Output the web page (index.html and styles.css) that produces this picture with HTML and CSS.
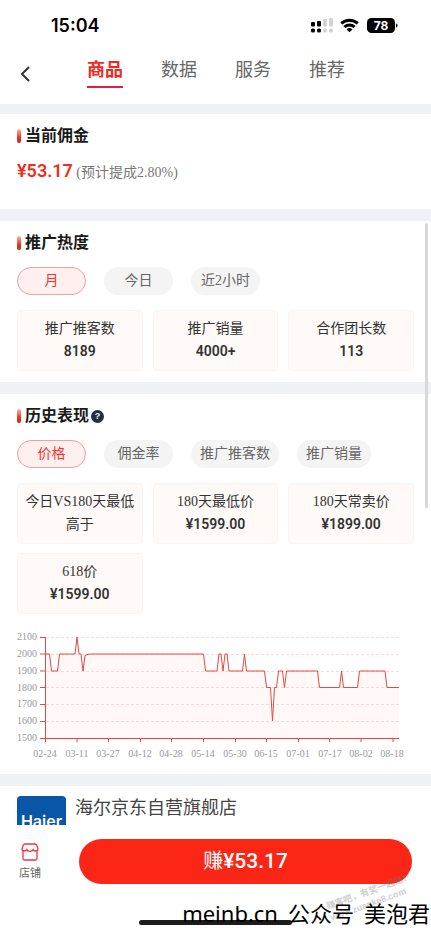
FILE: index.html
```html
<!DOCTYPE html>
<html lang="zh-CN">
<head>
<meta charset="utf-8">
<meta name="viewport" content="width=device-width, initial-scale=1">
<title>商品</title>
<link rel="stylesheet" href="styles.css">
</head>
<body>
<div class="app">
  <div class="status">
    <span class="time">15:04</span>
    <svg class="status-icons" width="88" height="18" viewBox="0 0 88 18" aria-hidden="true">
      <rect x="1" y="5" width="4" height="4.5" rx="1"/>
      <rect x="7" y="4" width="4" height="5.5" rx="1"/>
      <g class="dim">
        <rect x="13" y="2" width="4" height="7.5" rx="1"/>
        <rect x="19" y="1" width="4" height="8.5" rx="1"/>
        <rect x="13" y="11.500" width="4" height="4" rx="1.500"/>
        <rect x="19" y="11.500" width="4" height="4" rx="1.500"/>
      </g>
      <rect x="1" y="11.500" width="4" height="4" rx="1.500"/>
      <rect x="7" y="11.500" width="4" height="4" rx="1.500"/>
      <g class="wifi">
        <path d="M31.300 6.400a12.200 12.200 0 0 1 16.400 0"/>
        <path d="M34.400 10a7.500 7.500 0 0 1 10.200 0"/>
      </g>
      <path d="M39.500 15.300l-2.900-2.900a4.200 4.200 0 0 1 5.800 0z"/>
      <rect x="57" y="1" width="28" height="15" rx="4.500"/>
      <path d="M86 6.500c2 .5 2 3.500 0 4z"/>
      <text x="71" y="12.500" text-anchor="middle">78</text>
    </svg>
  </div>
  <header class="topbar">
    <button class="back" type="button" aria-label="返回">
      <svg width="12" height="18" viewBox="0 0 12 18" aria-hidden="true"><path d="M10 2L3 9l7 7"/></svg>
    </button>
    <nav class="tabs">
      <a class="tab active" href="#">商品</a>
      <a class="tab" href="#">数据</a>
      <a class="tab" href="#">服务</a>
      <a class="tab" href="#">推荐</a>
    </nav>
  </header>
  <main>
    <section class="panel commission">
      <h2>当前佣金</h2>
      <p class="amount"><strong>¥53.17</strong> (预计提成2.80%)</p>
    </section>
    <section class="panel">
      <h2>推广热度</h2>
      <div class="pills">
        <button class="pill selected" type="button">月</button>
        <button class="pill" type="button">今日</button>
        <button class="pill" type="button">近2小时</button>
      </div>
      <div class="cards">
        <div class="card"><span>推广推客数</span><b>8189</b></div>
        <div class="card"><span>推广销量</span><b>4000+</b></div>
        <div class="card"><span>合作团长数</span><b>113</b></div>
      </div>
    </section>
    <section class="panel">
      <h2>历史表现<button class="help" type="button">?</button></h2>
      <div class="pills">
        <button class="pill selected" type="button">价格</button>
        <button class="pill" type="button">佣金率</button>
        <button class="pill" type="button">推广推客数</button>
        <button class="pill" type="button">推广销量</button>
      </div>
      <div class="cards">
        <div class="card"><span>今日VS180天最低高于</span></div>
        <div class="card"><span>180天最低价</span><b>¥1599.00</b></div>
        <div class="card"><span>180天常卖价</span><b>¥1899.00</b></div>
        <div class="card"><span>618价</span><b>¥1599.00</b></div>
      </div>
      <svg class="chart" viewBox="17 614 397 149">
        <path class="area" d="M46 738V654H49.500L51.500 671H57.500L59.500 654H75L77 637L79 654H81L83 671L85 655.500L89 654H203.500L205.500 671H217L219 654H221L223 671L225 654H227L229 671H242.500L244.500 654L246.500 671H264.500L266.500 687.500H270.500L272.500 721L274.500 687.500H276.500L278.500 671H282.500L284.500 687.500L286.500 671H317.500L319.500 687.500H339.500L341.500 671L343.500 687.500H357.500L359.500 671H385L387 687.500H399V738Z"/>
        <path class="grid" d="M46 637.500H399M46 654.500H399M46 671.500H399M46 687.500H399M46 704.500H399M46 721.500H399"/>
        <path class="axis" d="M45.500 637V742M40 637.500H46M40 654H46M40 671H46M40 687.500H46M40 704.500H46M40 721.500H46M40 738.500H399M77 738V742M108.500 738V742M140.500 738V742M171.500 738V742M203.500 738V742M235.500 738V742M266.500 738V742M298.500 738V742M329.500 738V742M361 738V742M393 738V742"/>
        <path class="line" d="M46 654H49.500L51.500 671H57.500L59.500 654H75L77 637L79 654H81L83 671L85 655.500L89 654H203.500L205.500 671H217L219 654H221L223 671L225 654H227L229 671H242.500L244.500 654L246.500 671H264.500L266.500 687.500H270.500L272.500 721L274.500 687.500H276.500L278.500 671H282.500L284.500 687.500L286.500 671H317.500L319.500 687.500H339.500L341.500 671L343.500 687.500H357.500L359.500 671H385L387 687.500H399"/>
        <g class="ylabels">
          <text x="37" y="640">2100</text>
          <text x="37" y="657">2000</text>
          <text x="37" y="674">1900</text>
          <text x="37" y="691">1800</text>
          <text x="37" y="707">1700</text>
          <text x="37" y="724">1600</text>
          <text x="37" y="741">1500</text>
        </g>
        <g class="xlabels">
          <text x="45" y="757">02-24</text>
          <text x="77" y="757">03-11</text>
          <text x="108" y="757">03-27</text>
          <text x="140" y="757">04-12</text>
          <text x="171" y="757">04-28</text>
          <text x="203" y="757">05-14</text>
          <text x="235" y="757">05-30</text>
          <text x="266" y="757">06-15</text>
          <text x="298" y="757">07-01</text>
          <text x="330" y="757">07-17</text>
          <text x="361" y="757">08-02</text>
          <text x="392" y="757">08-18</text>
        </g>
      </svg>
    </section>
    <section class="shop">
      <svg class="logo" width="49" height="29" viewBox="0 0 49 29" role="img" aria-label="Haier">
        <path d="M0 29V4a4 4 0 0 1 4-4H45a4 4 0 0 1 4 4V29z"/>
        <text x="24.500" y="31" text-anchor="middle">Haier</text>
      </svg>
      <h3>海尔京东自营旗舰店</h3>
    </section>
  </main>
  <footer class="actions">
    <a class="store" href="#">
      <svg width="18" height="18" viewBox="0 0 18 18" aria-hidden="true">
        <path d="M4 1H14a2 2 0 0 1 1.800 1.200L17 5.800c.2 2.400-3.600 3-4.800.8-1.200 2.400-5.200 2.400-6.400 0C4.600 8.800.8 8.200 1 5.800L2.200 2.200A2 2 0 0 1 4 1zM2 8V15.500a1.500 1.500 0 0 0 1.500 1.500H14.500a1.500 1.500 0 0 0 1.500-1.500V8"/>
      </svg>
      店铺
    </a>
    <button class="earn" type="button">赚<strong>¥53.17</strong></button>
  </footer>
  <div class="scroll-thumb"></div>
  <div class="stamp">赚客吧，有奖一起赚！<br>www.zuanke8.com</div>
  <div class="home-bar"></div>
  <div class="credit"><span>meinb.cn</span><span>公众号</span><span>美泡君</span></div>
</div>
</body>
</html>
```
FILE: styles.css
```css
* {
  box-sizing: border-box;
}

body {
  margin: 0;
  background: #fff;
  color: #333;
  font: 14px/23px "Liberation Serif", "Noto Sans CJK SC", serif;
}

button {
  border: 0;
  padding: 0;
  background: none;
  color: inherit;
  font: inherit;
}

a {
  color: inherit;
  text-decoration: none;
}

h2, h3, p {
  margin: 0;
}

.app {
  position: relative;
  min-height: 100vh;
  overflow: hidden;
}

.status {
  display: flex;
  justify-content: space-between;
  align-items: center;
  padding: 12px 33px 12px 51px;
  color: #000;
}

.time {
  font: 600 18px/28px Inter, sans-serif;
}

.status-icons .dim {
  fill: #d2d2d2;
}

.status-icons .wifi {
  fill: none;
  stroke: #000;
  stroke-width: 3;
}

.status-icons text {
  fill: #fff;
  font: 700 12px Inter, sans-serif;
}

.topbar {
  display: flex;
  align-items: center;
  gap: 56px;
  padding: 5px 19px 16px;
}

.back {
  display: flex;
  padding-top: 2px;
}

.back path {
  fill: none;
  stroke: #333;
  stroke-width: 2;
}

.tabs {
  display: flex;
  gap: 38px;
}

.tab {
  border-bottom: 2px solid transparent;
  padding-bottom: 2px;
  color: #666;
  font-size: 18px;
  line-height: 27px;
}

.tab.active {
  border-color: #e0203a;
  color: #f5271b;
  font-weight: 700;
}

.panel, .shop {
  border-top: 12px solid #f0f1f5;
}

.panel {
  padding: 10px 17px 11px;
}

.commission {
  border-top-width: 10px;
  padding-bottom: 24px;
}

h2 {
  display: flex;
  align-items: center;
  color: #1a1a1a;
  font-size: 16px;
  line-height: 24px;
}

h2::before {
  content: "";
  width: 4px;
  height: 14px;
  margin-right: 4px;
  border-radius: 2px;
  background: linear-gradient(#ffb7a8, #ee3524 60%, #b82d1c);
}

.help {
  width: 13px;
  height: 13px;
  margin-left: 2px;
  border-radius: 50%;
  background: #252c45;
  color: #fff;
  font: 700 9px/13px "Liberation Sans", sans-serif;
}

.amount {
  margin-top: 11px;
  color: #777;
  line-height: 24px;
}

.amount strong {
  color: #f02b21;
  font: 600 18px/24px Roboto, sans-serif;
}

.pills {
  display: flex;
  gap: 18px;
  margin: 12px 0 15px;
}

.pill {
  min-width: 69px;
  padding: 0 9px;
  border-radius: 14px;
  background: #f4f4f4;
  color: #666;
  line-height: 28px;
}

.pill.selected {
  border: 1px solid #f0a0a0;
  background: #ffefef;
  color: #f0352b;
  line-height: 26px;
}

.cards {
  display: grid;
  grid-template-columns: repeat(3, 1fr);
  gap: 9px 10px;
}

.card {
  border: 1px solid #fcf4f1;
  border-radius: 4px;
  padding: 6px 4px 7px;
  background: #fff9f7;
  text-align: center;
}

.card span, .card b {
  display: block;
}

.card b {
  font-family: Roboto, sans-serif;
  font-weight: 600;
}

.chart {
  display: block;
  width: 100%;
}

.chart .area {
  fill: #fff8f7;
}

.chart .grid {
  fill: none;
  stroke: #f6d9da;
  stroke-dasharray: 3 2;
}

.chart .axis, .chart .line {
  fill: none;
  stroke: #e24a43;
}

.chart .axis {
  stroke-width: 1;
}

.chart text {
  fill: #999;
  font: 10px "Liberation Serif", serif;
}

.ylabels {
  text-anchor: end;
}

.xlabels {
  text-anchor: middle;
}

.shop {
  display: flex;
  gap: 9px;
  padding: 10px 17px 0;
}

.shop h3 {
  color: #444;
  font-size: 18px;
  font-weight: 400;
  line-height: 24px;
}

.logo path {
  fill: #0a57a8;
}

.logo text {
  fill: #fff;
  font: 600 16px Inter, sans-serif;
}

.actions {
  display: flex;
  align-items: center;
  gap: 38px;
  padding: 14px 19px 49px;
}

.store {
  display: flex;
  flex-direction: column;
  align-items: center;
  gap: 4px;
  color: #666;
  font-size: 11px;
  line-height: 16px;
}

.store path {
  fill: none;
  stroke: #ef3340;
  stroke-width: 1.3;
}

.earn {
  flex: 1;
  border-radius: 23px;
  background: #fb2616;
  color: #fff;
  font-size: 20px;
  line-height: 45px;
}

.earn strong {
  font-family: Roboto, sans-serif;
  font-size: 21px;
  font-weight: 500;
}

.scroll-thumb {
  position: absolute;
  top: 223px;
  right: 3px;
  width: 3px;
  height: 285px;
  border-radius: 2px;
  background: #d8d8d8;
}

.stamp {
  position: absolute;
  right: 15px;
  bottom: 24px;
  color: #777;
  font: 700 9px/12px "Liberation Sans", "Noto Sans CJK SC", sans-serif;
  opacity: 0.35;
  transform: rotate(-20deg);
}

.home-bar {
  position: absolute;
  bottom: 8px;
  left: 139px;
  width: 153px;
  height: 5px;
  border-radius: 3px;
  background: #1c1c1c;
}

.credit {
  position: absolute;
  right: 1px;
  bottom: 4px;
  display: flex;
  gap: 10px;
  color: #000;
  font: 22px/32px "Noto Sans", "Noto Sans CJK SC", sans-serif;
  white-space: nowrap;
}
```
